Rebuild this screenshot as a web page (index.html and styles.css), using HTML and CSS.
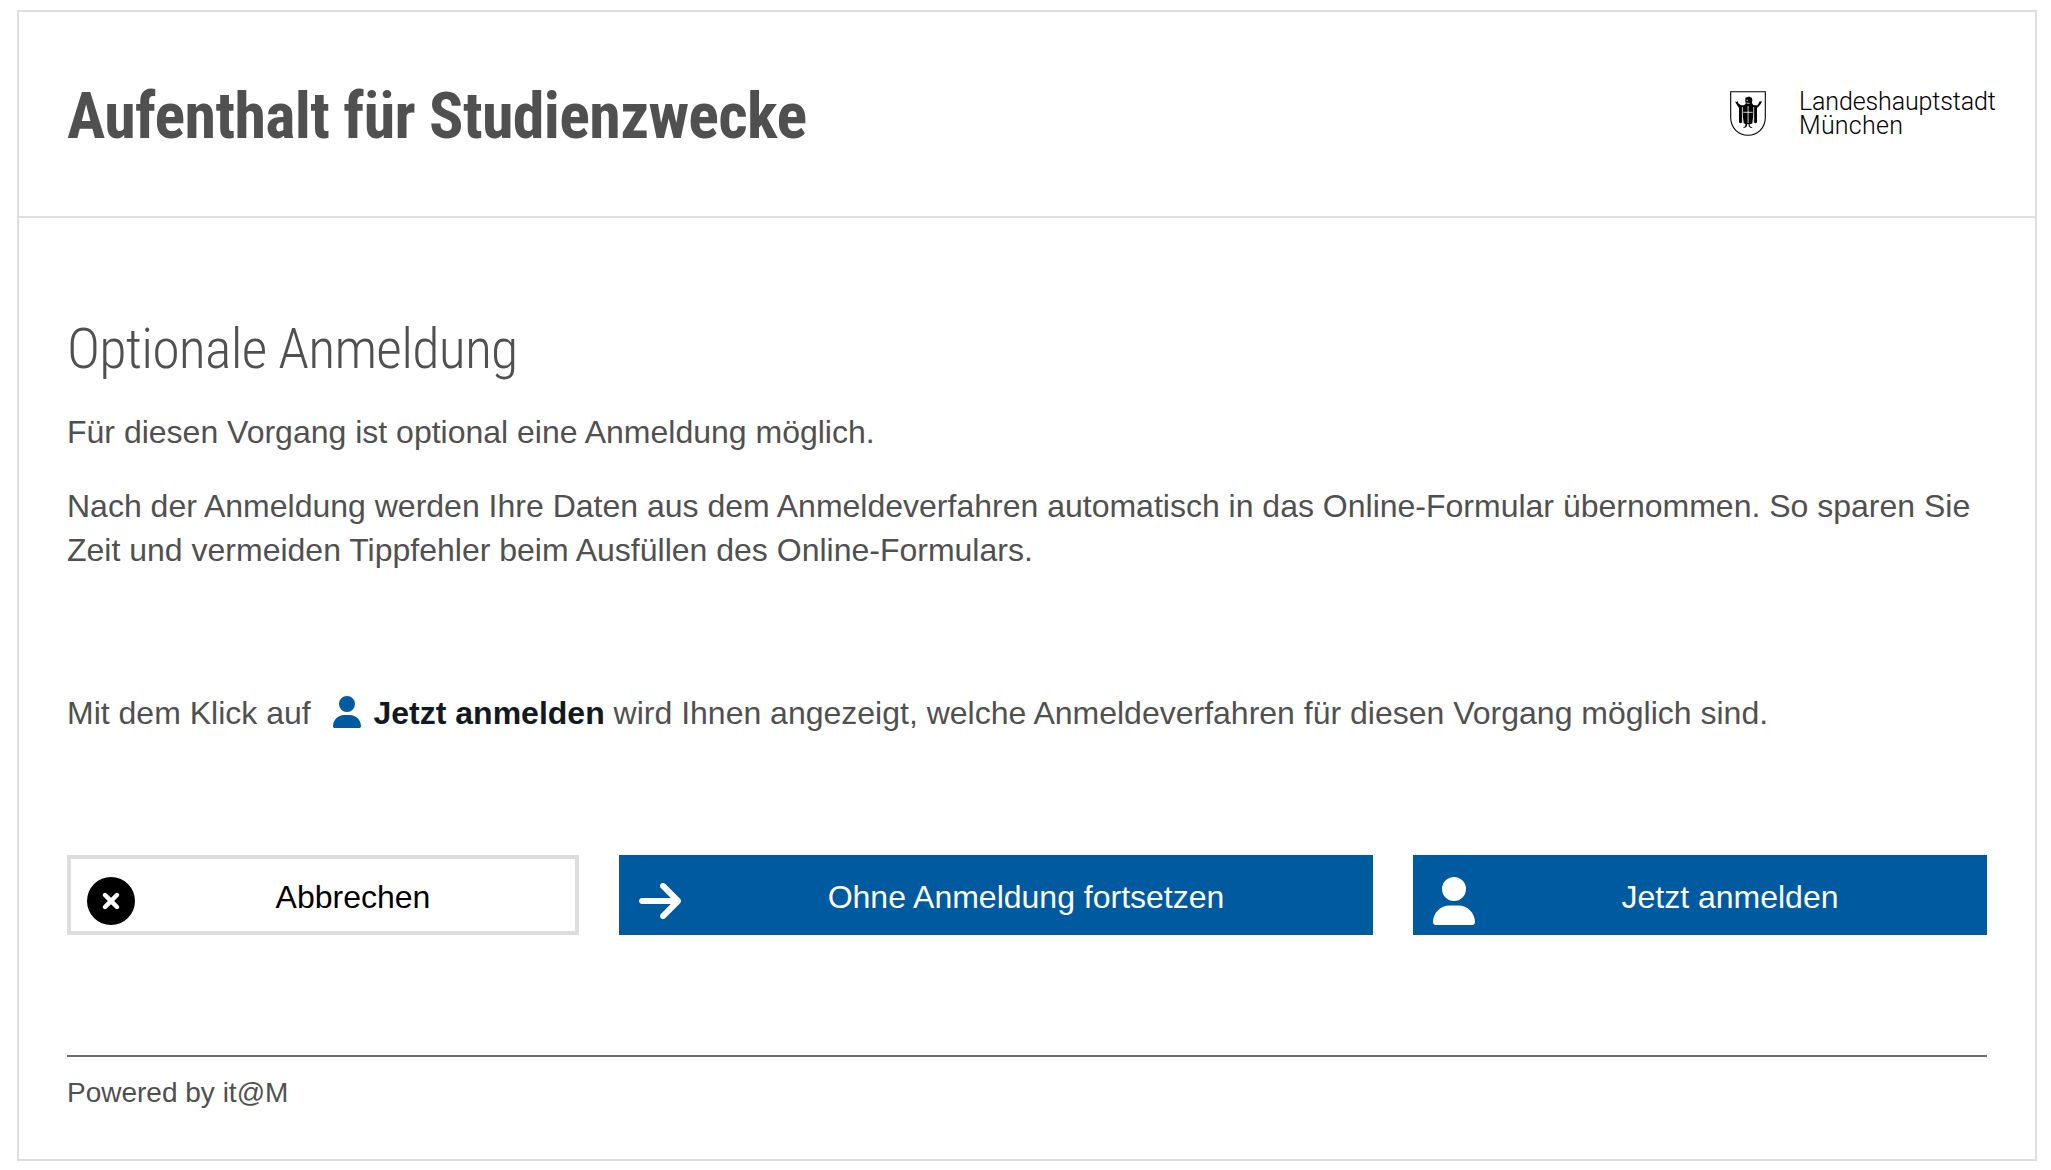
FILE: index.html
```html
<!DOCTYPE html>
<html lang="de">
<head>
<meta charset="utf-8">
<title>Aufenthalt für Studienzwecke</title>
<link rel="stylesheet" href="styles.css">
</head>
<body>
<div class="page">
  <header class="header">
    <h1 class="title">Aufenthalt für Studienzwecke</h1>
    <div class="brand">
      <svg class="shield" viewBox="0 0 36 45" width="36" height="45" aria-hidden="true">
        <path class="shield-frame" d="M.7.7H35.3V26.500C35.300 37 27.500 44.300 18 44.300S.7 37 .7 26.500Z"/>
        <path d="M15.200 9.500L15.500 6.700 19 5.600 22 7 22.400 9.500 21.800 11.800 23.500 14.200 27.500 14.200 29.300 11.300 30 9.700 30.800 10.800 32.200 10.300 31 12.600 29 15.200 27 17V31.500L25.500 32.300 23.600 31.300V22L22.300 32.500 20 33.300H16L13.700 32.300 12.500 22V31.300L10.500 32.300 9 31.500V17L7.300 14.400 5 10.500 6.800 11 7.400 9.800 8.500 12.500 11 14.200 14 14.200 15.800 12.500Z"/>
        <path d="M15.500 33L15.200 35.200 12.700 37 15 36.800 17 35.200V33ZM19.500 33L20 35.200 22.500 37 20.800 37 18.700 35.200V33Z"/>
        <path class="shield-light" d="M16.500 9.300H18M16.500 12L19.500 12.400M13.300 21.300H22.700M18.100 15V32M12.400 16V31M23.700 16V31"/>
      </svg>
      <div class="brand-name">
        <span class="brand-line">Landeshauptstadt</span>
        <span class="brand-line brand-city">München</span>
      </div>
    </div>
  </header>
  <main class="content">
    <h2 class="subtitle">Optionale Anmeldung</h2>
    <p class="text">Für diesen Vorgang ist optional eine Anmeldung möglich.</p>
    <p class="text">Nach der Anmeldung werden Ihre Daten aus dem Anmeldeverfahren automatisch in das Online-Formular übernommen. So sparen Sie Zeit und vermeiden Tippfehler beim Ausfüllen des Online-Formulars.</p>
    <p class="text hint">Mit dem Klick auf <svg class="user-small" viewBox="0 0 448 512" aria-hidden="true"><path d="M224 256a128 128 0 1 0 0-256 128 128 0 1 0 0 256zm-45.700 48C79.800 304 0 383.800 0 482.300 0 498.700 13.300 512 29.700 512h388.600c16.400 0 29.700-13.300 29.700-29.700 0-98.500-79.800-178.300-178.300-178.300h-91.400z"/></svg><strong>Jetzt anmelden</strong> wird Ihnen angezeigt, welche Anmeldeverfahren für diesen Vorgang möglich sind.</p>
    <div class="actions">
      <button class="btn btn-cancel" type="button">
        <svg class="icon" viewBox="0 0 512 512" aria-hidden="true"><path d="M256 512A256 256 0 1 0 256 0a256 256 0 1 0 0 512zM175 175c9.400-9.400 24.600-9.400 33.900 0l47 47 47-47c9.400-9.400 24.600-9.400 33.900 0s9.400 24.600 0 33.900l-47 47 47 47c9.400 9.400 9.400 24.600 0 33.900s-24.600 9.400-33.900 0l-47-47-47 47c-9.400 9.400-24.600 9.400-33.900 0s-9.400-24.600 0-33.900l47-47-47-47c-9.400-9.400-9.400-24.600 0-33.900z"/></svg>
        <span class="label">Abbrechen</span>
      </button>
      <button class="btn btn-primary" type="button">
        <svg class="icon icon-narrow" viewBox="0 0 448 512" aria-hidden="true"><path d="M438.600 278.600c12.500-12.500 12.500-32.800 0-45.300l-160-160c-12.500-12.500-32.800-12.500-45.300 0s-12.500 32.800 0 45.300L338.800 224 32 224c-17.700 0-32 14.300-32 32s14.300 32 32 32l306.700 0L233.400 393.400c-12.500 12.500-12.500 32.800 0 45.300s32.800 12.500 45.300 0l160-160z"/></svg>
        <span class="label">Ohne Anmeldung fortsetzen</span>
      </button>
      <button class="btn btn-primary" type="button">
        <svg class="icon icon-narrow" viewBox="0 0 448 512" aria-hidden="true"><path d="M224 256a128 128 0 1 0 0-256 128 128 0 1 0 0 256zm-45.700 48C79.800 304 0 383.800 0 482.300 0 498.700 13.300 512 29.700 512h388.600c16.400 0 29.700-13.300 29.700-29.700 0-98.500-79.800-178.300-178.300-178.300h-91.400z"/></svg>
        <span class="label">Jetzt anmelden</span>
      </button>
    </div>
    <footer class="footer">Powered by it@M</footer>
  </main>
</div>
</body>
</html>
```
FILE: styles.css
```css
* { box-sizing: border-box; }

body {
  margin: 0;
  padding: 10px 14px 9px 17px;
  background: #fff;
  color: #505050;
  font-family: Arial, "Liberation Sans", sans-serif;
}

.page {
  height: 1151px;
  border: 2px solid #dfdfdf;
}

.header {
  display: flex;
  justify-content: space-between;
  align-items: flex-start;
  height: 206px;
  padding: 66px 39px 0 48px;
  border-bottom: 2px solid #dfdfdf;
}

.title,
.subtitle {
  margin: 0;
  font-family: "Roboto Condensed", Roboto, sans-serif;
  font-stretch: 75%;
  white-space: nowrap;
}

.title {
  font-size: 64px;
  font-weight: 700;
  line-height: 78px;
  letter-spacing: -.65px;
}

.brand {
  display: flex;
  gap: 33px;
  padding-top: 13px;
  color: #000;
}

.shield-frame {
  fill: #fff;
  stroke: #000;
  stroke-width: 1.1;
}

.shield-light {
  fill: none;
  stroke: #fff;
  stroke-width: .8;
}

.brand-name {
  width: 197px;
  margin-top: -1px;
  font-family: Roboto, sans-serif;
  font-size: 25px;
  font-weight: 300;
  line-height: 24px;
  letter-spacing: -.13px;
  white-space: nowrap;
}

.brand-line { display: block; }

.brand-city { letter-spacing: .25px; }

.content {
  padding: 98px 48px 0;
}

.subtitle {
  font-size: 56px;
  font-weight: 300;
  line-height: 67px;
  letter-spacing: -.8px;
}

.text {
  margin: 0 0 30px;
  font-size: 32px;
  line-height: 44px;
}

.subtitle + .text { margin-top: 27px; }

.hint { margin-top: 119px; }

.hint strong { color: #111a20; }

.user-small {
  width: 28px;
  height: 32px;
  margin: 0 13px 0 13px;
  vertical-align: -4px;
  fill: #005a9f;
}

.actions {
  display: grid;
  grid-template-columns: 512px 754px 574px;
  gap: 40px;
  margin-top: 120px;
}

.btn {
  display: flex;
  align-items: center;
  height: 80px;
  margin: 0;
  padding: 0 0 0 16px;
  border: 4px solid #005a9f;
  font: 32px/44px Arial, "Liberation Sans", sans-serif;
}

.btn-cancel {
  border-color: #dcdddf;
  background: #fff;
  color: #000;
}

.btn-primary {
  background: #005a9f;
  color: #fff;
}

.icon {
  flex: none;
  width: 48px;
  height: 48px;
  margin-top: 12px;
  fill: currentColor;
}

.icon-narrow {
  width: 42px;
  margin-right: 6px;
}

.label {
  flex: 1;
  margin-left: -4px;
  padding-top: 4px;
}

.footer {
  margin-top: 120px;
  padding-top: 18px;
  border-top: 2px solid #686b70;
  font-size: 28px;
  line-height: 36px;
}
```
